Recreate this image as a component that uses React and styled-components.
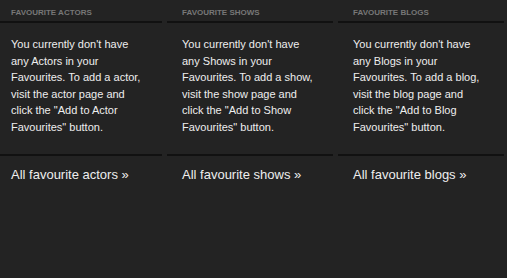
import React from "react";
import styled, { createGlobalStyle } from "styled-components";

const Global = createGlobalStyle`
  html, body {
    margin: 0;
    padding: 0;
    background: #232323;
    overflow: hidden;
  }
  body {
    font-family: "Liberation Sans", Arial, sans-serif;
    -webkit-font-smoothing: antialiased;
  }
`;

const Page = styled.div`
  width: 507px;
  height: 278px;
  background: #232323;
  overflow: hidden;
`;

const Columns = styled.div`
  display: grid;
  grid-template-columns: repeat(3, 166px);
  grid-template-rows: auto auto auto;
  column-gap: 5px;
  margin-left: -4px;
`;

const Column = styled.section`
  display: grid;
  grid-row: span 3;
  grid-template-rows: subgrid;
`;

const Title = styled.h3`
  margin: 0;
  padding: 7px 0 2px 15px;
  font-size: 8px;
  line-height: 12px;
  font-weight: bold;
  text-transform: uppercase;
  color: #777777;
  border-bottom: 2px solid #111111;
`;

const Body = styled.p`
  margin: 0;
  padding: 13px 19px 19px 15px;
  font-size: 11px;
  line-height: 16.5px;
  color: #eeeeee;
  border-bottom: 2px solid #111111;
`;

const More = styled.a`
  display: block;
  padding: 11px 0 0 15px;
  font-size: 13px;
  line-height: 16px;
  color: #eeeeee;
  text-decoration: none;
`;

const sections = [
  {
    title: "Favourite Actors",
    text: 'You currently don\'t have any Actors in your Favourites. To add a actor, visit the actor page and click the "Add to Actor Favourites" button.',
    link: "All favourite actors",
  },
  {
    title: "Favourite Shows",
    text: 'You currently don\'t have any Shows in your Favourites. To add a show, visit the show page and click the "Add to Show Favourites" button.',
    link: "All favourite shows",
  },
  {
    title: "Favourite Blogs",
    text: 'You currently don\'t have any Blogs in your Favourites. To add a blog, visit the blog page and click the "Add to Blog Favourites" button.',
    link: "All favourite blogs",
  },
];

export default function App() {
  return (
    <Page>
      <Global />
      <Columns>
        {sections.map((s) => (
          <Column key={s.title}>
            <Title>{s.title}</Title>
            <Body>{s.text}</Body>
            <More href="#">{s.link} »</More>
          </Column>
        ))}
      </Columns>
    </Page>
  );
}
